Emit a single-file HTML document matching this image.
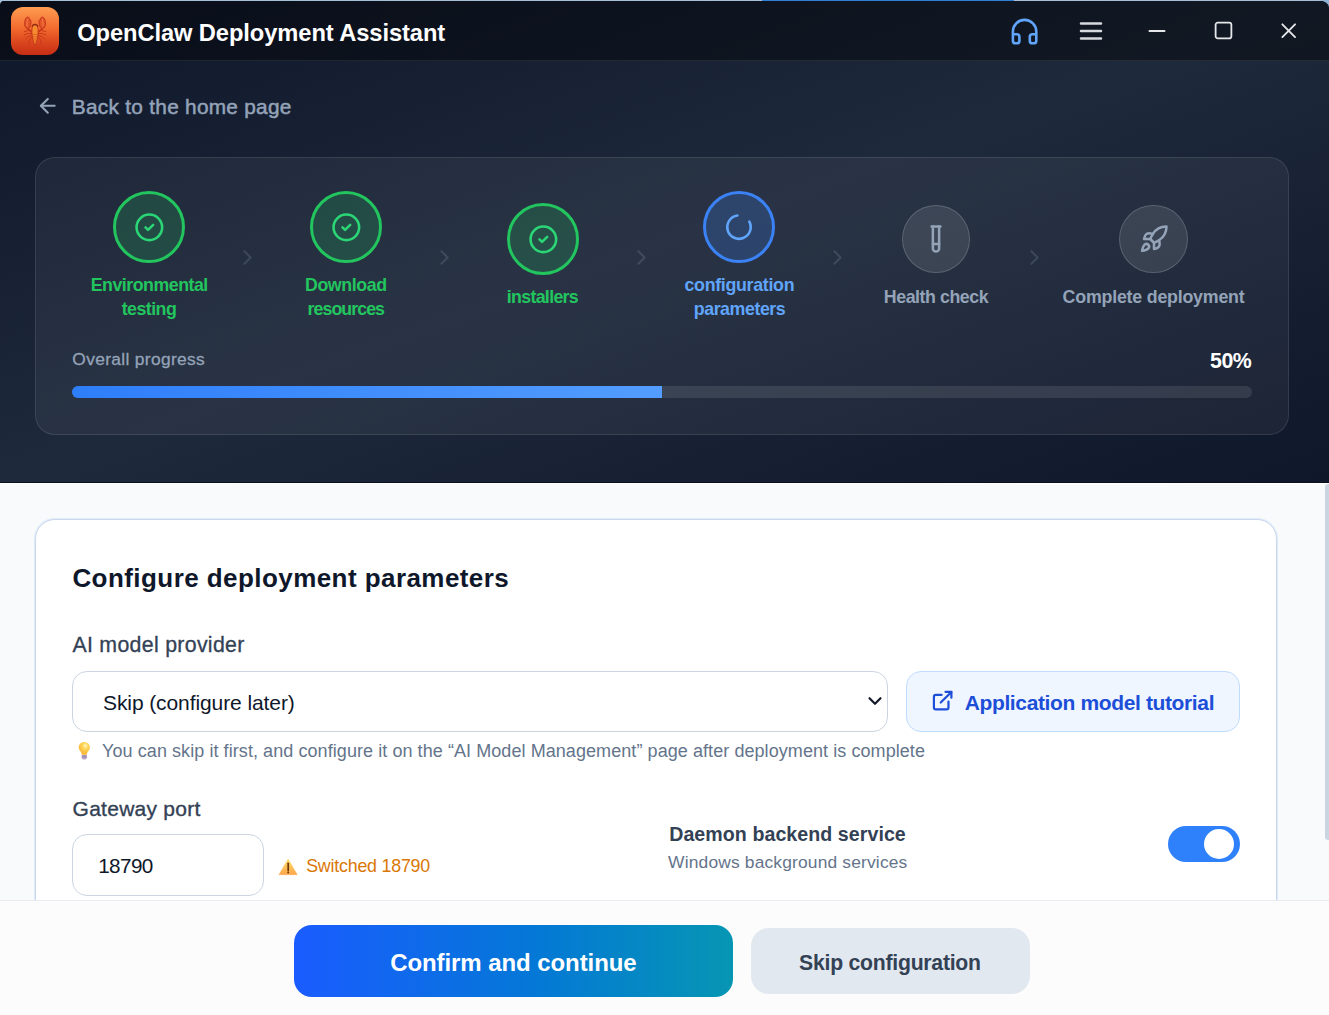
<!DOCTYPE html>
<html>
<head>
<meta charset="utf-8">
<title>OpenClaw Deployment Assistant</title>
<style>
*{box-sizing:border-box;margin:0;padding:0}
html,body{width:1329px;height:1015px;overflow:hidden;background:#f8fafc}
body{font-family:"Liberation Sans",sans-serif;position:relative}
.abs{position:absolute}
.t{position:absolute;white-space:nowrap;line-height:1}
#dark{left:0;top:0;width:1329px;height:483px;background:linear-gradient(to bottom right,#0f172a 0%,#1e293b 50%,#0f172a 100%)}
#titlebar{left:0;top:0;width:1329px;height:61px;background:rgba(0,0,0,0.4);border-bottom:1px solid rgba(255,255,255,0.09)}
#topline{left:0;top:0;width:1329px;height:1px;background:#a8bfd8}
#topblue{left:762px;top:0;width:252px;height:1px;background:#2f7fd6}
#logo{left:11px;top:7px;width:48px;height:48px;border-radius:12px;background:linear-gradient(180deg,#ff9d52 0%,#f26a2e 45%,#dd4a1f 70%,#c72d15 100%)}
#stepcard{left:35px;top:157px;width:1254px;height:278px;border-radius:20px;background:rgba(255,255,255,0.05);border:1px solid rgba(255,255,255,0.1)}
.circ{position:absolute;border-radius:50%}
.done{width:72.6px;height:72.6px;border:3px solid #22c55e;background:rgba(34,197,94,0.2)}
.act{width:72.6px;height:72.6px;border:3px solid #3b82f6;background:rgba(59,130,246,0.22)}
.idle{width:68.6px;height:68.6px;border:1px solid rgba(255,255,255,0.17);background:rgba(255,255,255,0.1)}
#track{left:72px;top:386px;width:1180px;height:12px;border-radius:6px;background:rgba(255,255,255,0.1)}
#fill{left:72px;top:386px;width:590px;height:12px;border-radius:6px 0 0 6px;background:linear-gradient(90deg,#2e7ef9,#539dff)}
#scrollthumb{left:1325px;top:484px;width:4px;height:356px;background:#cbd5e1;border-radius:3px 0 0 3px}
#card{left:35px;top:519px;width:1242px;height:420px;border-radius:20px;background:#fff;border:1px solid #cbd8ea;box-shadow:0 0 0 1px rgba(214,230,252,0.75)}
#select{left:72px;top:670.5px;width:816px;height:61px;border-radius:15px;border:1px solid #cbd5e1;background:#fff}
#tutbtn{left:906px;top:670.5px;width:334px;height:61px;border-radius:15px;border:1px solid #bfdbfe;background:#eff6ff}
#port{left:72px;top:834px;width:192px;height:61.5px;border-radius:15px;border:1px solid #cbd5e1;background:#fff}
#toggle{left:1168px;top:826px;width:72px;height:36px;border-radius:18px;background:#2f80fb}
#knob{left:1204px;top:829px;width:30px;height:30px;border-radius:50%;background:#fff}
#footer{left:0;top:900px;width:1329px;height:115px;background:#fcfcfd;border-top:1px solid #e8ecf1}
#confirm{left:294px;top:925px;width:439px;height:72px;border-radius:18px;background:linear-gradient(90deg,#1a5cff 0%,#0478d6 55%,#0696b3 100%)}
#skip{left:751px;top:928px;width:279px;height:66px;border-radius:18px;background:#e2e8f0}
svg{position:absolute;overflow:visible}
#darkline{left:0;top:482px;width:1329px;height:1px;background:#0a101c}
#whiteline{left:0;top:483px;width:1329px;height:1px;background:#fff}

</style>
</head>
<body>
<div id="dark" class="abs"></div>
<div id="darkline" class="abs"></div>
<div id="whiteline" class="abs"></div>
<div id="titlebar" class="abs"></div>
<div id="topline" class="abs"></div>
<div id="topblue" class="abs"></div>
<div id="logo" class="abs"></div>
<div id="stepcard" class="abs"></div>
<div class="circ done" style="left:112.7px;top:190.7px"></div>
<div class="circ done" style="left:309.7px;top:190.7px"></div>
<div class="circ done" style="left:506.8px;top:202.6px"></div>
<div class="circ act" style="left:702.7px;top:190.7px"></div>
<div class="circ idle" style="left:901.8px;top:204.7px"></div>
<div class="circ idle" style="left:1119px;top:204.7px"></div>
<div id="track" class="abs"></div>
<div id="fill" class="abs"></div>
<div id="scrollthumb" class="abs"></div>
<div id="card" class="abs"></div>
<div id="select" class="abs"></div>
<div id="tutbtn" class="abs"></div>
<div id="port" class="abs"></div>
<div id="toggle" class="abs"></div>
<div id="knob" class="abs"></div>
<div id="footer" class="abs"></div>
<div id="confirm" class="abs"></div>
<div id="skip" class="abs"></div>

<svg style="left:1009.40px;top:15.50px" width="31.2" height="31.2" viewBox="0 0 24 24" fill="none" stroke="#60a5fa" stroke-width="2" stroke-linecap="round" stroke-linejoin="round" ><path d="M3 14h3a2 2 0 0 1 2 2v3a2 2 0 0 1-2 2H5a2 2 0 0 1-2-2v-7a9 9 0 0 1 18 0v7a2 2 0 0 1-2 2h-1a2 2 0 0 1-2-2v-3a2 2 0 0 1 2-2h3"/></svg>
<svg style="left:1076.00px;top:15.90px" width="30" height="30" viewBox="0 0 24 24" fill="none" stroke="#d6d9de" stroke-width="2" stroke-linecap="round" stroke-linejoin="round" ><path d="M4 6h16M4 12h16M4 18h16"/></svg>
<svg style="left:1144.10px;top:17.70px" width="26" height="26" viewBox="0 0 24 24" fill="none" stroke="#e5e7eb" stroke-width="1.7" stroke-linecap="round" stroke-linejoin="round" ><path d="M5 12h14"/></svg>
<svg style="left:1213.10px;top:19.70px" width="21" height="21" viewBox="0 0 24 24" fill="none" stroke="#e5e7eb" stroke-width="2.05" stroke-linecap="round" stroke-linejoin="round" ><rect x="3" y="3" width="18" height="18" rx="2.5"/></svg>
<svg style="left:1276.30px;top:18.30px" width="25.4" height="25.4" viewBox="0 0 24 24" fill="none" stroke="#e5e7eb" stroke-width="1.75" stroke-linecap="round" stroke-linejoin="round" ><path d="M18 6 6 18M6 6l12 12"/></svg>
<svg style="left:35.60px;top:93.80px" width="23.6" height="23.6" viewBox="0 0 24 24" fill="none" stroke="#94a3b8" stroke-width="2.1" stroke-linecap="round" stroke-linejoin="round" ><path d="m12 19-7-7 7-7"/><path d="M19 12H5"/></svg>
<svg style="left:133.65px;top:211.65px" width="30.7" height="30.7" viewBox="0 0 24 24" fill="none" stroke="#2bd676" stroke-width="2" stroke-linecap="round" stroke-linejoin="round" ><circle cx="12" cy="12" r="10"/><path d="m9 12 2 2 4-4"/></svg>
<svg style="left:330.65px;top:211.65px" width="30.7" height="30.7" viewBox="0 0 24 24" fill="none" stroke="#2bd676" stroke-width="2" stroke-linecap="round" stroke-linejoin="round" ><circle cx="12" cy="12" r="10"/><path d="m9 12 2 2 4-4"/></svg>
<svg style="left:527.75px;top:223.55px" width="30.7" height="30.7" viewBox="0 0 24 24" fill="none" stroke="#2bd676" stroke-width="2" stroke-linecap="round" stroke-linejoin="round" ><circle cx="12" cy="12" r="10"/><path d="m9 12 2 2 4-4"/></svg>
<svg style="left:0;top:0" width="1329" height="483" fill="none" stroke="#60a5fa" stroke-width="2.6" stroke-linecap="round"><path d="M749.33 221.61A11.7 11.7 0 1 1 737.37 215.51"/></svg>
<svg style="left:921.00px;top:224.00px" width="30" height="30" viewBox="0 0 24 24" fill="none" stroke="#94a3b8" stroke-width="2" stroke-linecap="round" stroke-linejoin="round" ><path d="M14.5 2v17.5c0 1.4-1.1 2.5-2.5 2.5c-1.4 0-2.5-1.1-2.5-2.5V2"/><path d="M8.5 2h7"/><path d="M14.5 16h-5"/></svg>
<svg style="left:1138.50px;top:223.50px" width="30" height="30" viewBox="0 0 24 24" fill="none" stroke="#94a3b8" stroke-width="2" stroke-linecap="round" stroke-linejoin="round" ><path d="M4.5 16.5c-1.5 1.26-2 5-2 5s3.74-.5 5-2c.71-.84.7-2.13-.09-2.91a2.18 2.18 0 0 0-2.91-.09z"/><path d="m12 15-3-3a22 22 0 0 1 2-3.95A12.88 12.88 0 0 1 22 2c0 2.72-.78 7.5-6 11a22.35 22.35 0 0 1-4 2z"/><path d="M9 12H4s.55-3.03 2-4c1.62-1.08 5 0 5 0"/><path d="M12 15v5s3.03-.55 4-2c1.08-1.62 0-5 0-5"/></svg>
<svg style="left:235.40px;top:244.50px" width="25" height="25" viewBox="0 0 24 24" fill="none" stroke="rgba(148,163,184,0.22)" stroke-width="2" stroke-linecap="round" stroke-linejoin="round" ><path d="m9 18 6-6-6-6"/></svg>
<svg style="left:432.00px;top:244.50px" width="25" height="25" viewBox="0 0 24 24" fill="none" stroke="rgba(148,163,184,0.22)" stroke-width="2" stroke-linecap="round" stroke-linejoin="round" ><path d="m9 18 6-6-6-6"/></svg>
<svg style="left:628.50px;top:244.50px" width="25" height="25" viewBox="0 0 24 24" fill="none" stroke="rgba(148,163,184,0.22)" stroke-width="2" stroke-linecap="round" stroke-linejoin="round" ><path d="m9 18 6-6-6-6"/></svg>
<svg style="left:825.20px;top:244.50px" width="25" height="25" viewBox="0 0 24 24" fill="none" stroke="rgba(148,163,184,0.22)" stroke-width="2" stroke-linecap="round" stroke-linejoin="round" ><path d="m9 18 6-6-6-6"/></svg>
<svg style="left:1021.90px;top:244.50px" width="25" height="25" viewBox="0 0 24 24" fill="none" stroke="rgba(148,163,184,0.22)" stroke-width="2" stroke-linecap="round" stroke-linejoin="round" ><path d="m9 18 6-6-6-6"/></svg>
<svg style="left:864.30px;top:690.10px" width="22" height="22" viewBox="0 0 24 24" fill="none" stroke="#111827" stroke-width="2.35" stroke-linecap="round" stroke-linejoin="round" ><path d="m6 9 6 6 6-6"/></svg>
<svg style="left:931.05px;top:689.15px" width="23.3" height="23.3" viewBox="0 0 24 24" fill="none" stroke="#1d4ed8" stroke-width="2.25" stroke-linecap="round" stroke-linejoin="round" ><path d="M15 3h6v6"/><path d="M10 14 21 3"/><path d="M18 13v6a2 2 0 0 1-2 2H5a2 2 0 0 1-2-2V8a2 2 0 0 1 2-2h6"/></svg>
<svg style="left:11px;top:7px" width="48" height="48" viewBox="0 0 48 48" fill="none" stroke="#c2341a" stroke-width="1" stroke-linecap="round" stroke-linejoin="round">
<path d="M16.600 21.800c-2.300-.6-3.300-3.200-3-6.200.3-3 1.500-5.500 3-5.600 1.200-.1 1.900 1.300 2.100 3 .9-.7 1.300.700 1.200 2.600-.2 3-.9 5.400-3.300 6.200z" fill="#e4552a"/>
<path d="M31.400 21.800c2.300-.6 3.300-3.200 3-6.200-.3-3-1.500-5.500-3-5.600-1.200-.1-1.900 1.300-2.100 3-.9-.7-1.300.700-1.200 2.600.2 3 .9 5.400 3.300 6.200z" fill="#e4552a"/>
<path d="M16.100 19c-.300-2.400 0-5 .8-7M31.900 19c.3-2.400 0-5-.8-7" stroke="#f08a4a" stroke-width="0.800"/>
<path d="M17 21.800 21 25.200M31 21.800 27 25.200" stroke-width="1.300"/>
<path d="M21 24.500 17.500 23.500 13.500 24.500M21 26.500 16.500 26.500 13 28M21 28.500 17 29.500 14.500 32M27 24.500 30.500 23.500 34.500 24.500M27 26.500 31.500 26.500 35 28M27 28.500 31 29.500 33.500 32" stroke-width="0.900"/>
<path d="M21.500 30c-2.500 1-3.500 3-3.700 6.500M26.500 30c2.500 1 3.500 3 3.700 6.500" stroke-width="0.800"/>
<path d="M24 17.500c-2 0-3.100 2.200-3.100 6 0 5.500 1.300 12 3.100 14.800 1.800-2.800 3.100-9.300 3.100-14.800 0-3.800-1.100-6-3.100-6z" fill="#f58a2e" stroke="#c2341a" stroke-width="0.900"/>
<path d="M22.300 27.500h3.400M22.300 29.800h3.400M22.500 32h3M22.900 34.200h2.200" stroke-width="0.700" stroke="#d9531f"/>
<path d="M21.200 19.200c.6-1.200 1.500-1.700 2.800-1.700s2.200.5 2.800 1.700" stroke="#8f2c14" stroke-width="1.400"/>
</svg>
<svg style="left:0;top:0" width="10" height="10"><path d="M0 0H7A7 4.5 0 0 0 0 4.5Z" fill="#a6bfd9"/></svg>
<svg style="left:1317px;top:0" width="12" height="8"><path d="M12 0H0A12 8 0 0 1 12 8Z" fill="#90b4d3"/></svg>
<svg style="left:76px;top:740px" width="17" height="21" viewBox="0 0 17 21">
<defs><radialGradient id="bg1" cx="0.6" cy="0.3" r="0.7"><stop offset="0" stop-color="#fff9c4"/><stop offset="0.35" stop-color="#fdd65a"/><stop offset="1" stop-color="#f9b233"/></radialGradient></defs>
<path d="M8.300 1.900c-3.100 0-5.600 2.400-5.600 5.300 0 2 1 3.200 1.900 4.400.7 1 1.100 1.900 1.200 3.100h5c.1-1.200.5-2.100 1.200-3.100.9-1.200 1.900-2.400 1.900-4.400 0-2.900-2.500-5.300-5.600-5.300z" fill="url(#bg1)"/>
<rect x="5.700" y="14.900" width="5.200" height="3.800" rx="0.800" fill="#a493b5"/>
<rect x="6.900" y="18.600" width="2.800" height="1" rx="0.500" fill="#b9a6cc"/>
</svg>
<svg style="left:278px;top:857px" width="21" height="20" viewBox="0 0 21 20">
<defs><linearGradient id="wg1" x1="0" y1="0" x2="0" y2="1"><stop offset="0" stop-color="#ffdc6b"/><stop offset="1" stop-color="#ffa64a"/></linearGradient></defs>
<path d="M10.100 2.200 1.200 17.600h17.800z" fill="url(#wg1)" stroke="url(#wg1)" stroke-width="0.800" stroke-linejoin="round"/>
<path d="M10.200 6.300v7.200" stroke="#6b3a06" stroke-width="1.700" stroke-linecap="round" fill="none"/>
<circle cx="10.200" cy="15.500" r="0.950" fill="#6b3a06"/>
</svg>

<div class="t" id="t_title" style="left:77.20px;top:21.94px;font-size:23.7px;font-weight:bold;color:#ffffff;letter-spacing:-0.083px;">OpenClaw Deployment Assistant</div>
<div class="t" id="t_back" style="left:71.80px;top:97.19px;font-size:20.8px;font-weight:normal;color:#94a3b8;letter-spacing:0.285px;-webkit-text-stroke:0.5px #94a3b8;">Back to the home page</div>
<div class="t" id="t_env1" style="left:90.75px;top:276.68px;font-size:17.8px;font-weight:bold;color:#22c55e;letter-spacing:-0.501px;">Environmental</div>
<div class="t" id="t_env2" style="left:121.75px;top:301.03px;font-size:17.8px;font-weight:bold;color:#22c55e;letter-spacing:-0.549px;">testing</div>
<div class="t" id="t_dl1" style="left:305.00px;top:276.68px;font-size:17.8px;font-weight:bold;color:#22c55e;letter-spacing:-0.422px;">Download</div>
<div class="t" id="t_dl2" style="left:307.50px;top:301.03px;font-size:17.8px;font-weight:bold;color:#22c55e;letter-spacing:-0.939px;">resources</div>
<div class="t" id="t_inst" style="left:506.75px;top:288.93px;font-size:17.8px;font-weight:bold;color:#22c55e;letter-spacing:-0.677px;">installers</div>
<div class="t" id="t_cfg1" style="left:684.50px;top:276.68px;font-size:17.8px;font-weight:bold;color:#60a5fa;letter-spacing:-0.299px;">configuration</div>
<div class="t" id="t_cfg2" style="left:693.75px;top:301.03px;font-size:17.8px;font-weight:bold;color:#60a5fa;letter-spacing:-0.432px;">parameters</div>
<div class="t" id="t_hc" style="left:883.80px;top:289.43px;font-size:17.8px;font-weight:bold;color:#94a3b8;letter-spacing:-0.446px;">Health check</div>
<div class="t" id="t_cd" style="left:1062.60px;top:289.43px;font-size:17.8px;font-weight:bold;color:#94a3b8;letter-spacing:-0.203px;">Complete deployment</div>
<div class="t" id="t_op" style="left:72.30px;top:350.87px;font-size:17.4px;font-weight:normal;color:#94a3b8;letter-spacing:0.328px;-webkit-text-stroke:0.3px #94a3b8;">Overall progress</div>
<div class="t" id="t_pct" style="left:1210.00px;top:351.17px;font-size:21.3px;font-weight:bold;color:#ffffff;letter-spacing:-0.462px;">50%</div>
<div class="t" id="t_h" style="left:72.40px;top:564.99px;font-size:26px;font-weight:bold;color:#0f172a;letter-spacing:0.436px;">Configure deployment parameters</div>
<div class="t" id="t_ai" style="left:72.40px;top:634.97px;font-size:21.3px;font-weight:normal;color:#334155;letter-spacing:0.312px;-webkit-text-stroke:0.3px #334155;">AI model provider</div>
<div class="t" id="t_sel" style="left:103.00px;top:692.32px;font-size:21px;font-weight:normal;color:#0f172a;letter-spacing:-0.093px;">Skip (configure later)</div>
<div class="t" id="t_tut" style="left:964.70px;top:692.32px;font-size:21px;font-weight:bold;color:#1d4ed8;letter-spacing:-0.369px;">Application model tutorial</div>
<div class="t" id="t_hint" style="left:102.10px;top:741.66px;font-size:18px;font-weight:normal;color:#64748b;letter-spacing:0.070px;">You can skip it first, and configure it on the “AI Model Management” page after deployment is complete</div>
<div class="t" id="t_gw" style="left:72.60px;top:797.72px;font-size:21px;font-weight:normal;color:#334155;letter-spacing:0.254px;-webkit-text-stroke:0.35px #334155;">Gateway port</div>
<div class="t" id="t_port" style="left:98.20px;top:855.88px;font-size:20.7px;font-weight:normal;color:#0f172a;letter-spacing:-0.608px;">18790</div>
<div class="t" id="t_sw" style="left:306.20px;top:858.03px;font-size:17.8px;font-weight:normal;color:#d97706;letter-spacing:-0.196px;">Switched 18790</div>
<div class="t" id="t_dm" style="left:669.20px;top:824.61px;font-size:19.6px;font-weight:bold;color:#334155;letter-spacing:0.064px;">Daemon backend service</div>
<div class="t" id="t_win" style="left:668.10px;top:853.97px;font-size:17.4px;font-weight:normal;color:#64748b;letter-spacing:0.166px;">Windows background services</div>
<div class="t" id="t_conf" style="left:390.20px;top:951.08px;font-size:24px;font-weight:bold;color:#ffffff;letter-spacing:-0.079px;">Confirm and continue</div>
<div class="t" id="t_skip" style="left:799.10px;top:951.95px;font-size:21.2px;font-weight:bold;color:#334155;letter-spacing:-0.240px;">Skip configuration</div>
</body>
</html>
